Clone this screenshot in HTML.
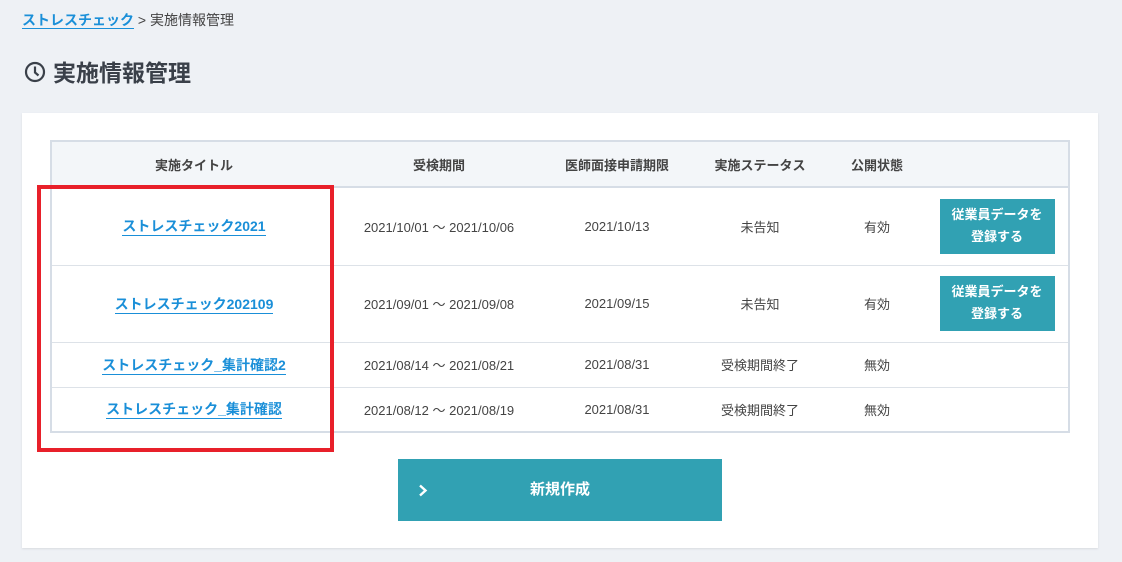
<!DOCTYPE html>
<html><head><meta charset="utf-8"><style>
*{margin:0;padding:0;box-sizing:border-box}
body{width:1122px;height:562px;background:#eef1f5;font-family:"Liberation Sans","Noto Sans CJK JP",sans-serif;color:#333;position:relative;overflow:hidden}
.abs{position:absolute}
.crumb{left:22px;top:10px;font-size:14px;color:#444}
.crumb a{color:#1a8fd8;text-decoration:none;border-bottom:1.5px solid #1a8fd8;font-weight:bold}
h1{position:absolute;left:53px;top:54px;font-size:23px;font-weight:bold;color:#3a4049}
.card{left:22px;top:113px;width:1076px;height:435px;background:#fff;box-shadow:0 1px 2px #d8dbe0}
table{position:absolute;left:50px;top:140px;width:1020px;border-collapse:collapse;border:2px solid #d6dde6;font-size:13px;table-layout:fixed}
th{background:#f3f6f9;height:46px;font-weight:bold;color:#444;border-bottom:2px solid #d6dde6}
td{text-align:center;border-top:1px solid #dde2e8;color:#444}
td a{color:#1a8fd8;font-weight:bold;text-decoration:none;border-bottom:1.5px solid #1a8fd8;font-size:14px;padding-bottom:1px}
.btn{display:inline-block;background:#31a1b3;color:#fff;font-weight:bold;width:115px;height:55px;line-height:22px;padding-top:5px;font-size:13px}
.red{left:37px;top:185px;width:297px;height:267px;border:4px solid #e8202a}
.new{left:398px;top:459px;width:324px;height:62px;background:#31a1b3;color:#fff;font-weight:bold;font-size:15px;text-align:center;line-height:62px}
</style></head><body>
<div class="abs crumb"><a>ストレスチェック</a> &gt; 実施情報管理</div>
<svg class="abs" style="left:24px;top:61px" width="22" height="22" viewBox="0 0 22 22"><circle cx="11" cy="11" r="9" fill="none" stroke="#3a4049" stroke-width="2.2"/><path d="M11 5.5V11.5L14.5 14.5" fill="none" stroke="#3a4049" stroke-width="2.2"/></svg>
<h1>実施情報管理</h1>
<div class="abs card"></div>
<table>
<colgroup><col style="width:285px"><col style="width:206px"><col style="width:150px"><col style="width:136px"><col style="width:98px"><col style="width:143px"></colgroup>
<tr><th>実施タイトル</th><th>受検期間</th><th>医師面接申請期限</th><th>実施ステータス</th><th>公開状態</th><th></th></tr>
<tr style="height:78px"><td><a>ストレスチェック2021</a></td><td>2021/10/01 ～ 2021/10/06</td><td>2021/10/13</td><td>未告知</td><td>有効</td><td><span class="btn">従業員データを<br>登録する</span></td></tr>
<tr style="height:77px"><td><a>ストレスチェック202109</a></td><td>2021/09/01 ～ 2021/09/08</td><td>2021/09/15</td><td>未告知</td><td>有効</td><td><span class="btn">従業員データを<br>登録する</span></td></tr>
<tr style="height:45px"><td><a>ストレスチェック_集計確認2</a></td><td>2021/08/14 ～ 2021/08/21</td><td>2021/08/31</td><td>受検期間終了</td><td>無効</td><td></td></tr>
<tr style="height:45px"><td><a>ストレスチェック_集計確認</a></td><td>2021/08/12 ～ 2021/08/19</td><td>2021/08/31</td><td>受検期間終了</td><td>無効</td><td></td></tr>
</table>
<div class="abs red"></div>
<div class="abs new">新規作成</div>
<svg class="abs" style="left:418px;top:484px" width="10" height="13" viewBox="0 0 10 13"><path d="M2 1.5L7.5 6.5L2 11.5" fill="none" stroke="#fff" stroke-width="2.4"/></svg>
</body></html>
